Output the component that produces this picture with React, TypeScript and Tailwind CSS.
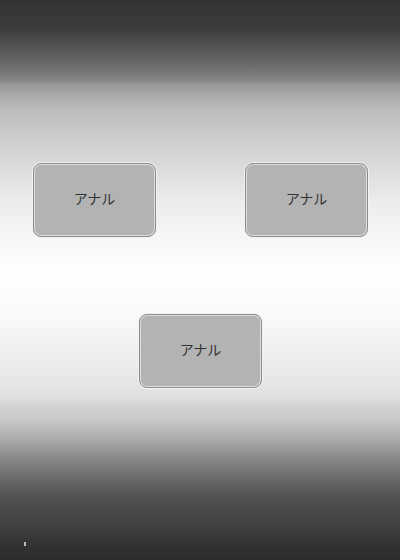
import React from 'react';

// vertical "metal" backdrop, stops read off the screenshot
const bg =
  'bg-[linear-gradient(to_bottom,#333333_0%,#3c3c3c_5%,#575757_9%,#6e6e6e_12%,#858585_14.3%,#999999_15.2%,#aaaaaa_17%,#bcbcbc_19.6%,#c8c8c8_23%,#d3d3d3_27%,#ececec_36%,#ffffff_48%,#fafafa_56%,#ececec_65%,#e0e0e0_71%,#d6d6d6_72%,#c8c8c8_75%,#aaaaaa_78.5%,#888888_82%,#666666_86%,#505050_89%,#444444_93%,#333333_97%,#2c2c2c_100%)]';

function Tile({ label }: { label: string }) {
  return (
    <button className="w-[123px] h-[74px] rounded-lg border border-[#8c8c8c] bg-[#b3b3b3] shadow-[inset_0_0_0_1px_#dedede,0_0_0_1px_#f2f2f2] flex items-center justify-center pb-[3px] text-[14px] text-[#333] [font-family:'Noto_Sans_CJK_JP',sans-serif]">
      {label}
    </button>
  );
}

export default function App() {
  return (
    <div className={`relative w-[400px] h-[560px] ${bg} flex flex-col`}>
      <div className="flex justify-between pl-[33px] pr-[32px] pt-[163px]">
        <Tile label="アナル" />
        <Tile label="アナル" />
      </div>
      <div className="flex justify-center pt-[77px] pl-px">
        <Tile label="アナル" />
      </div>
      {/* tiny marker bottom-left */}
      <div className="absolute left-[24px] top-[542px] w-[2px] h-[4px] bg-[#bdbdbd]" />
    </div>
  );
}
